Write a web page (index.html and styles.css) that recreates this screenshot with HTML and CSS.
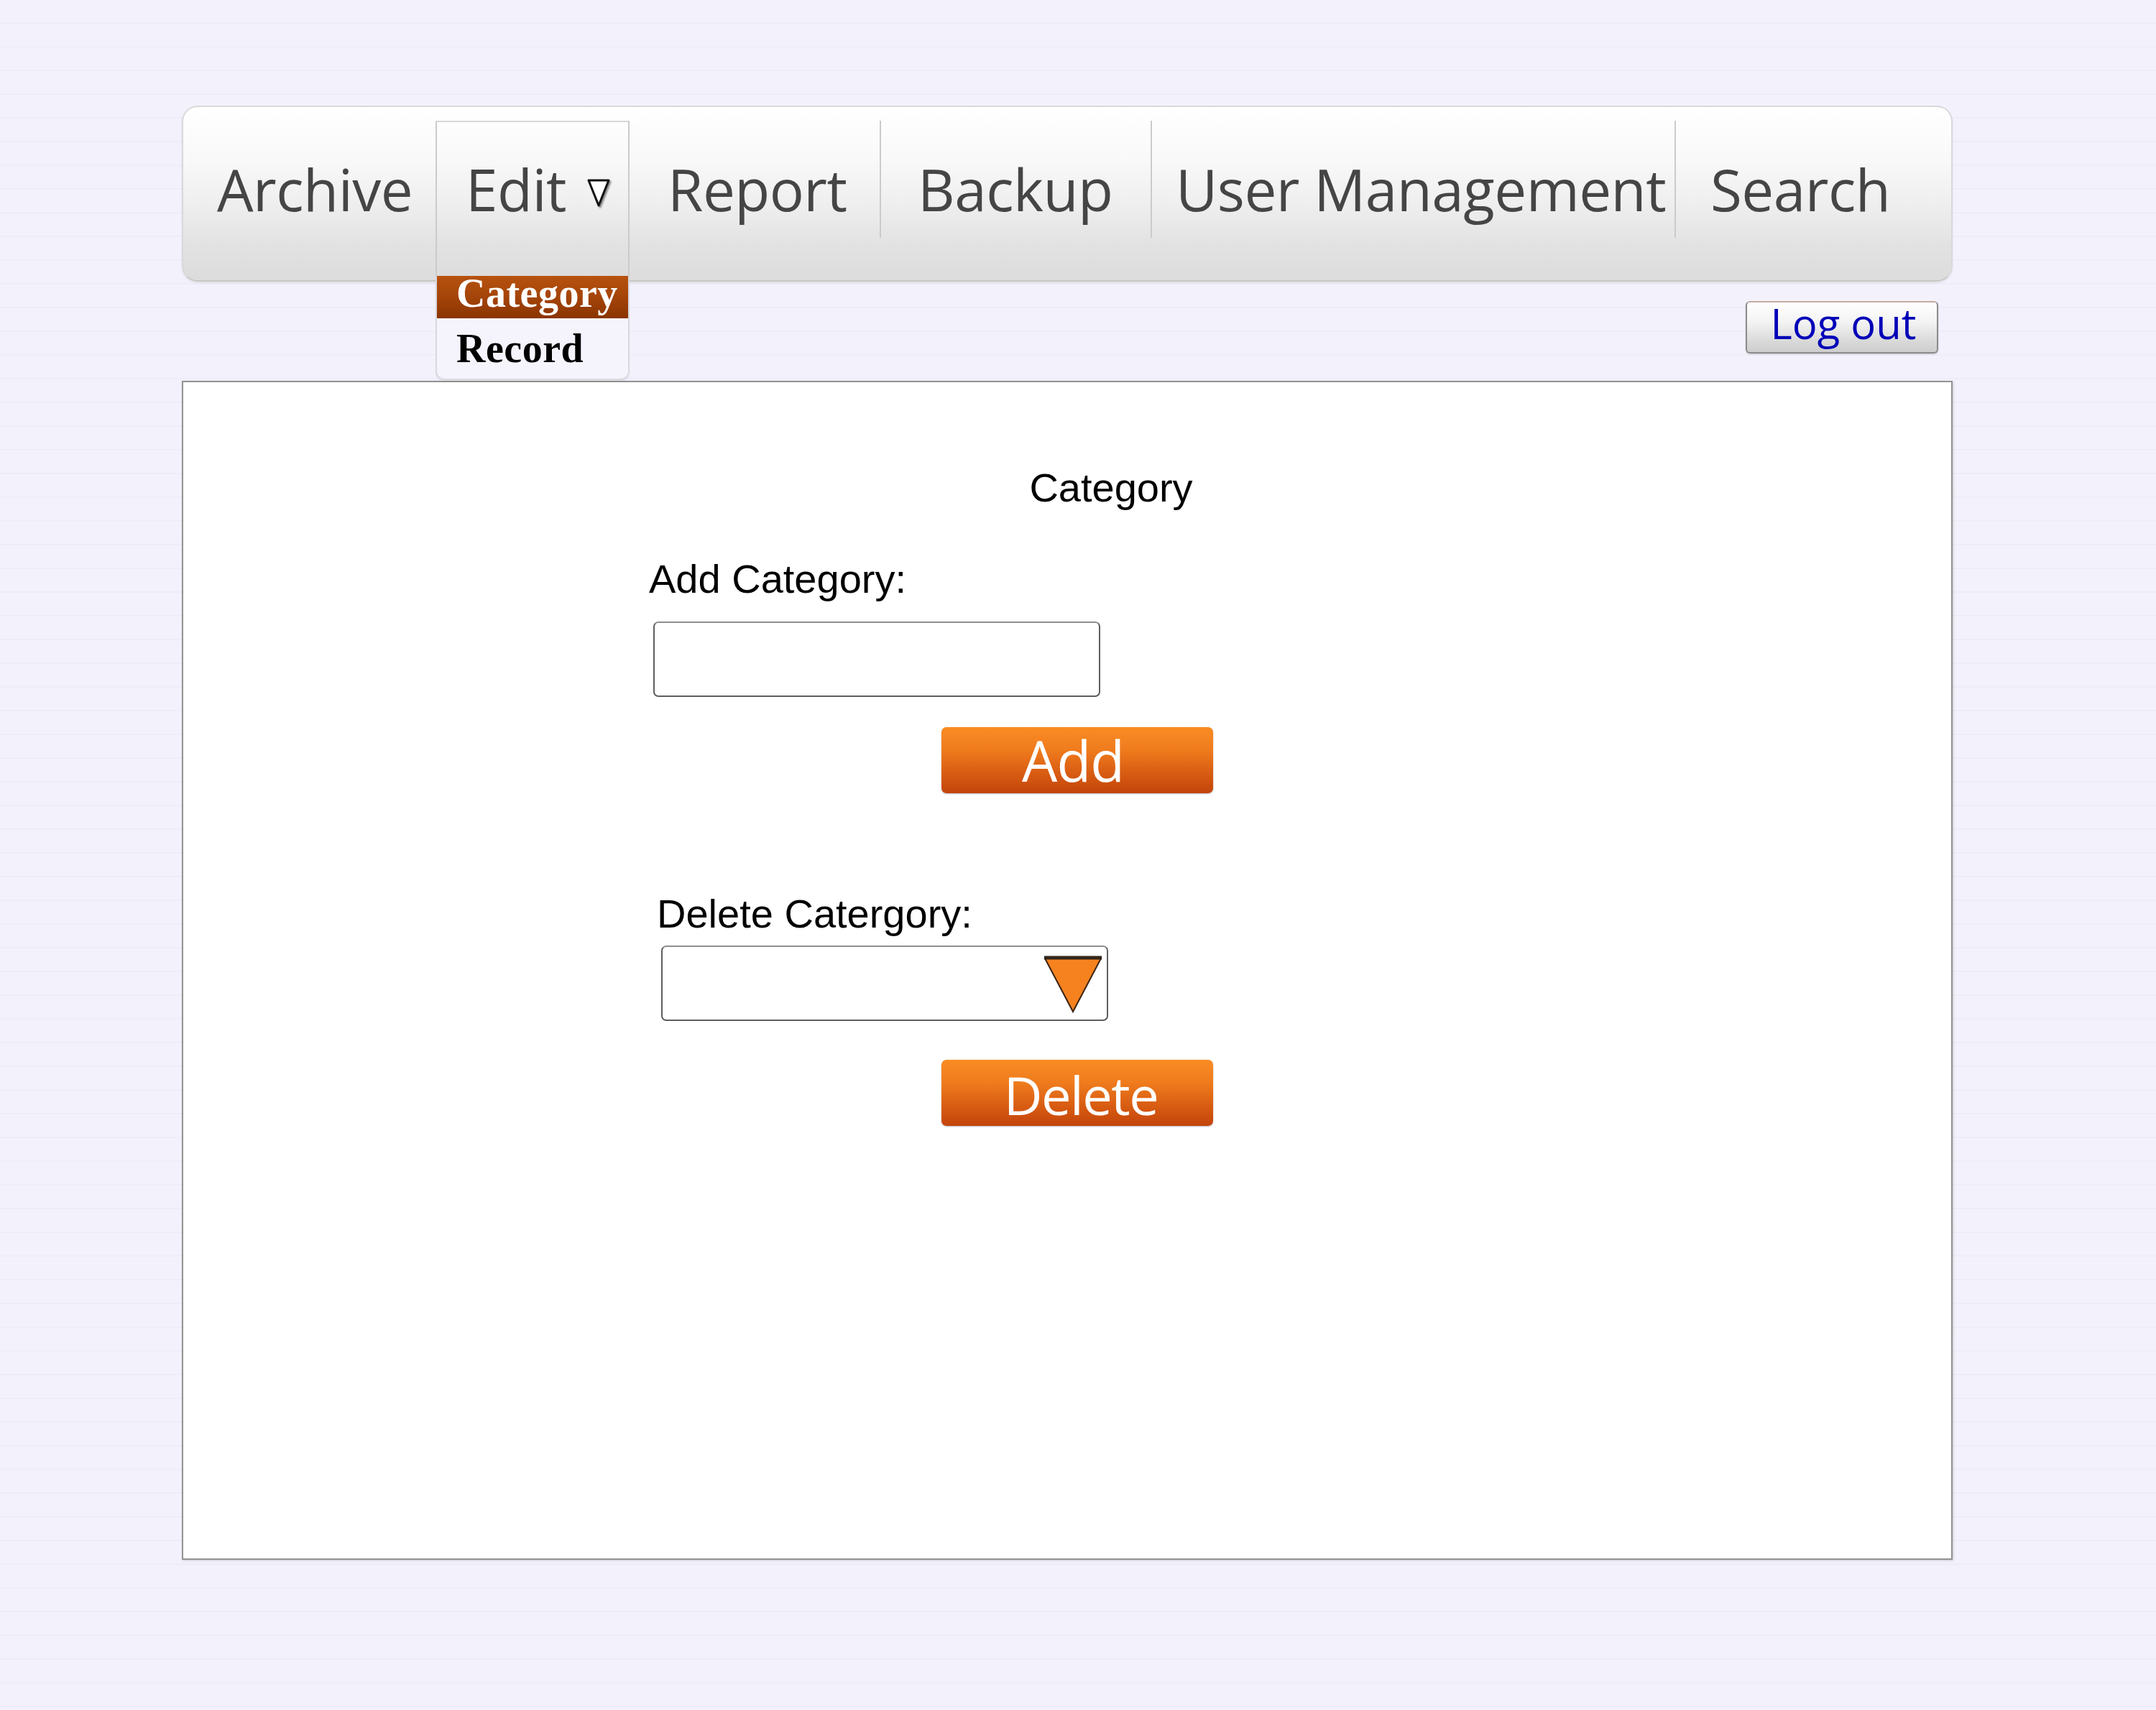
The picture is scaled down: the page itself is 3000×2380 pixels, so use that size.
FILE: index.html
```html
<!DOCTYPE html>
<html lang="en">
<head>
<meta charset="utf-8">
<title>Category</title>
<link rel="stylesheet" href="styles.css">
</head>
<body>
<div class="page">
  <nav class="menubar">
    <div class="menu-item item-archive">Archive</div>
    <div class="menu-item item-edit">
      <span>Edit</span><svg class="caret" width="34" height="42" viewBox="0 0 34 42"><polygon points="3,4 31,4 17,39" fill="#ffffff" stroke="#111111" stroke-width="3" stroke-linejoin="round"/></svg>
      <ul class="dropdown">
        <li class="dd-item dd-active">Category</li>
        <li class="dd-item">Record</li>
      </ul>
    </div>
    <div class="menu-item item-report">Report</div>
    <div class="menu-item item-backup">Backup</div>
    <div class="menu-item item-users">User Management</div>
    <div class="menu-item item-search">Search</div>
  </nav>

  <div class="toolbar">
    <a class="logout">Log out</a>
  </div>

  <main class="panel">
    <div class="form">
      <h1 class="title">Category</h1>
      <label class="field-label">Add Category:</label>
      <input class="text-input" type="text">
      <button class="btn-orange">Add</button>
      <label class="field-label label-delete">Delete Catergory:</label>
      <div class="select">
        <svg class="select-arrow" width="84" height="82" viewBox="0 0 84 82"><polygon points="3,5 81,5 42,79" fill="#f5821f" stroke="#3c2412" stroke-width="2" stroke-linejoin="miter"/><line x1="2" y1="4" x2="82" y2="4" stroke="#33261a" stroke-width="5"/></svg>
      </div>
      <button class="btn-orange btn-delete">Delete</button>
    </div>
  </main>
</div>
</body>
</html>
```

FILE: styles.css
```css
html, body {
  margin: 0;
  padding: 0;
}

body {
  background-color: #f3f2fc;
  background-image: repeating-linear-gradient(to bottom, #f3f2fc 0px, #f3f2fc 31px, #edecf8 31px, #edecf8 33px);
  width: 3000px;
  min-height: 2380px;
}

.page {
  padding: 147px 0 0 253px;
  width: 2464px;
}

/* ---------- menu bar ---------- */
.menubar {
  position: relative;
  z-index: 2;
  box-sizing: border-box;
  height: 245px;
  display: grid;
  grid-template-columns: 351px 270px 348px 377px 729px 1fr;
  align-items: start;
  border: 2px solid #d9d9dc;
  border-bottom-color: #c8c8c2;
  border-radius: 22px;
  background: linear-gradient(to bottom, #ffffff 0%, #f9f9f9 30%, #efefef 55%, #e2e2e2 80%, #dcdcdc 100%);
  box-shadow: 0 2px 3px rgba(0, 0, 0, 0.08);
}

.menu-item {
  box-sizing: border-box;
  margin-top: 19px;
  height: 163px;
  padding-top: 42px;
  font-family: "Open Sans", "Noto Sans", sans-serif;
  font-size: 80px;
  line-height: 106px;
  color: #454545;
  white-space: nowrap;
  letter-spacing: -0.5px;
}

.item-archive { padding-left: 47px; }
.item-report  { padding-left: 53px; }
.item-backup  { padding-left: 51px; border-left: 2px solid #cbcbcb; }
.item-users   { padding-left: 33px; border-left: 2px solid #cbcbcb; }
.item-search  { padding-left: 48px; border-left: 2px solid #cbcbcb; }

.item-edit {
  position: relative;
  height: 216px;
  padding-top: 40px;
  padding-left: 40px;
  border: 2px solid #d6d6d8;
  border-bottom: none;
  border-left-color: #cbcbcb;
  border-right-color: #cbcbcb;
}

.caret {
  margin-left: 28px;
  vertical-align: 5px;
  filter: drop-shadow(2px 2px 1px rgba(0, 0, 0, 0.45));
}

.dropdown {
  position: absolute;
  top: 100%;
  left: -2px;
  right: -2px;
  margin: 0;
  padding: 0 0 12px;
  list-style: none;
  background: #f5f4fc;
  border: 2px solid #d9d9e0;
  border-top: none;
  border-radius: 0 0 12px 12px;
  box-shadow: 0 2px 3px rgba(0, 0, 0, 0.05);
}

.dd-item {
  font-family: "Liberation Serif", "Times New Roman", serif;
  font-weight: bold;
  font-size: 56px;
  line-height: 59px;
  padding: 13px 0 0 27px;
  color: #000000;
  letter-spacing: 0.5px;
}

.dd-active {
  height: 59px;
  line-height: 48px;
  padding-top: 0;
  color: #ffffff;
  background: linear-gradient(to bottom, #b7520f 0%, #a44409 50%, #8a3400 100%);
}

/* ---------- toolbar ---------- */
.toolbar {
  display: flex;
  justify-content: flex-end;
  padding-right: 20px;
  margin-top: 27px;
}

.logout {
  display: block;
  box-sizing: border-box;
  width: 268px;
  height: 73px;
  padding: 0 0 12px 4px;
  text-align: center;
  font-family: "Open Sans", "Noto Sans", sans-serif;
  font-size: 58px;
  line-height: 57px;
  color: #0000b8;
  border: 2px solid #8c8c8c;
  border-top-color: #c6aaa0;
  border-radius: 6px;
  background: linear-gradient(to bottom, #ffffff 0%, #f3f3f3 40%, #d8d8d8 80%, #cdcdcd 100%);
  box-shadow: 0 1px 2px rgba(0, 0, 0, 0.2);
}

/* ---------- main panel ---------- */
.panel {
  display: block;
  box-sizing: border-box;
  margin-top: 38px;
  height: 1641px;
  background: #ffffff;
  border: 2px solid #939393;
  box-shadow: 1px 1px 3px rgba(0, 0, 0, 0.18);
}

.form {
  margin-left: 648px;
  padding-top: 115px;
  width: 1286px;
  font-family: "Liberation Sans", Arial, sans-serif;
  color: #000000;
}

.title {
  margin: 0;
  font-size: 56px;
  font-weight: normal;
  line-height: 64px;
  text-align: center;
}

.field-label {
  display: block;
  margin-top: 63px;
  font-size: 56px;
  line-height: 64px;
}

.label-delete {
  margin-top: 136px;
  margin-left: 11px;
}

.text-input {
  display: block;
  box-sizing: border-box;
  margin: 27px 0 0 6px;
  width: 622px;
  height: 105px;
  border: 2px solid #5e5e5e;
  border-top-color: #8e8e8e;
  border-radius: 7px;
  background: #ffffff;
}

.select {
  box-sizing: border-box;
  display: flex;
  justify-content: flex-end;
  align-items: flex-start;
  margin: 12px 0 0 17px;
  padding: 11px 5px 0 0;
  width: 622px;
  height: 105px;
  border: 2px solid #5e5e5e;
  border-top-color: #8e8e8e;
  border-radius: 7px;
  background: #ffffff;
}

.select-arrow {
  display: block;
}

.btn-orange {
  display: block;
  margin: 42px 0 0 407px;
  padding: 0 12px 0 0;
  width: 378px;
  height: 92px;
  border: none;
  border-radius: 7px;
  background: linear-gradient(to bottom, #f98c24 0%, #ef7b1d 35%, #d85c12 70%, #c3440b 100%);
  box-shadow: 0 1px 2px rgba(0, 0, 0, 0.3);
  color: #ffffff;
  font-family: "Open Sans", "Noto Sans", sans-serif;
  font-size: 78px;
  line-height: 92px;
  text-align: center;
  letter-spacing: -1px;
}

.btn-delete {
  margin-top: 54px;
  padding: 3px 0 0 10px;
  font-size: 74px;
  letter-spacing: -1.5px;
}
```
